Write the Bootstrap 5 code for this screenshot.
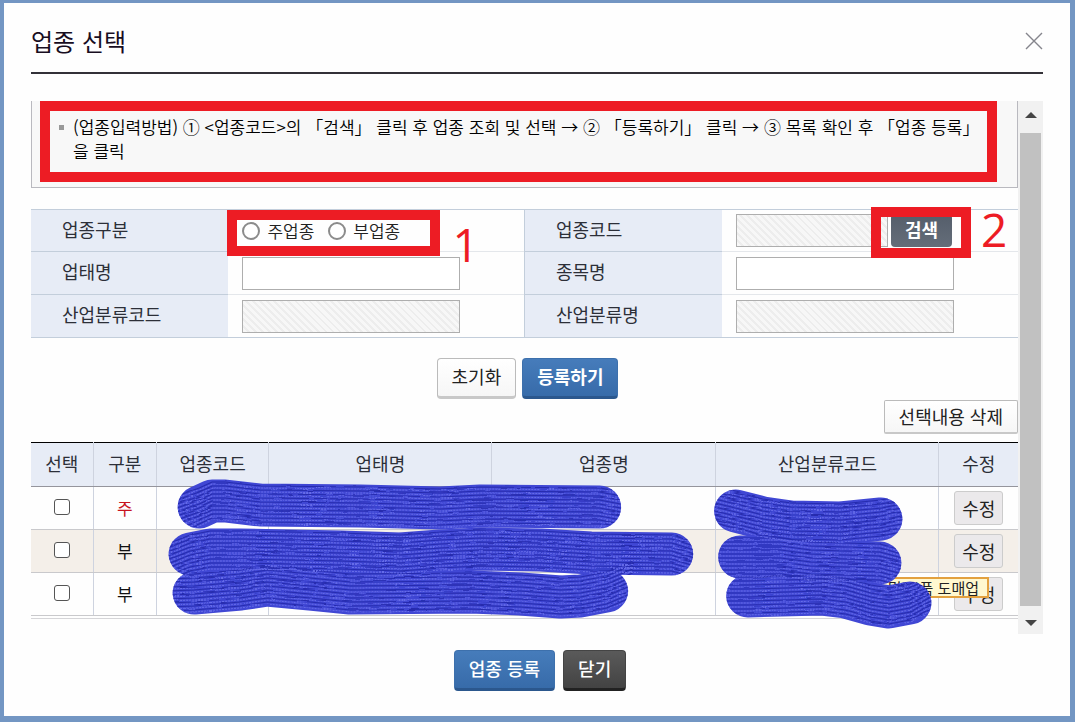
<!DOCTYPE html>
<html lang="ko">
<head>
<meta charset="utf-8">
<meta name="viewport" content="width=device-width, initial-scale=1">
<title>업종 선택</title>
<link href="https://cdn.jsdelivr.net/npm/bootstrap@5.3.0/dist/css/bootstrap.min.css" rel="stylesheet">
<style>
  body { background: #7396c3; font-family: "Noto Sans CJK KR", sans-serif; font-size: 17px; line-height: 24px; color: #111; }
  .frame { min-height: 100vh; padding: 3px 5px 6px 4px; }
  .dialog-box { background: #fefefe; padding: 16px 27px 24px; }
  .dialog-head { border-bottom: 2px solid #333138; height: 55px; padding-bottom: 10px; }
  .dialog-head h1 { font-size: 24px; line-height: 32px; font-weight: 400; color: #180d1f; }
  .close-x { width: 18px; height: 18px; }
  .scroll-area { margin-top: 27px; }
  .pane { min-width: 0; padding-bottom: 15px; }
  .bar { width: 25px; background: #f1f1f1; padding: 0 2px; }
  .bar .arrow { height: 32px; padding-bottom: 4px; }
  .bar .thumb { background: #c1c1c1; margin-bottom: -4px; }
  .ring { position: absolute; border: 10px solid #ed1c24; pointer-events: none; z-index: 2; }
  .guide { border: 1px solid #b9b9bf; border-top: 0; background: #f8f8f8; height: 87px; padding: 14px 32px 0 27px; }
  .guide .ring { inset: 0 20px 5px 8px; }
  .guide li { padding-left: 14px; color: #000; font-weight: 350; }
  .guide li::before { content: ""; position: absolute; left: 0; top: 10px; width: 5px; height: 5px; background: #999; }
  .form-grid { margin-top: 21px; border-top: 1px solid #c3cedb; table-layout: fixed; }
  .form-grid tr { height: 43px; border-bottom: 1px solid #e4e7eb; }
  .form-grid tr:first-child { height: 42px; }
  .form-grid tr:last-child { border-bottom-color: #c3cedb; }
  .form-grid th { width: 20%; padding: 0 0 4px 31px; background: #e7ecf6; border-bottom: 1px solid #c3cedb; font-size: 18px; font-weight: 400; color: #2c2f38; }
  .form-grid th:nth-child(3) { border-left: 1px solid #c3cedb; }
  .form-grid td { padding: 0 0 0 14px; }
  .field-box { width: 218px; height: 33px; border: 1px solid #aeaeae; border-radius: 0; padding: 0 6px; background: #fff; }
  .field-box:disabled { background: repeating-linear-gradient(45deg, #f7f7f7 0 3px, #ededed 3px 5px); }
  .field-box.short { width: 152px; }
  .pick input { appearance: none; width: 18px; height: 18px; border: 2px solid #8b8b8b; border-radius: 50%; background: #fff; margin: 0 7px 0 0; }
  .pick label { margin-right: 14px; color: #222; font-weight: 350; }
  .pick .ring { inset: -9px auto auto -15px; width: 213px; height: 46px; }
  .find-wrap .ring { inset: -7px auto auto 135px; width: 100px; height: 51px; }
  .step-no { position: absolute; font: 46px/50px "Open Sans", sans-serif; color: #ed1c24; z-index: 3; }
  .pick .step-no { left: 210px; top: 0; }
  .find-wrap .step-no { left: 245px; top: -10px; }
  .act { border-radius: 4px; height: 41px; padding: 0 14px 3px; font-size: 18px; line-height: 24px; font-weight: 400; color: #222; }
  .act.plain { background: linear-gradient(#fff, #f6f6f6); border: 1px solid #bbb; border-bottom: 3px solid #c8c8c8; }
  .act.blue { background: linear-gradient(#467cbb, #376ba9); border: 1px solid #3d70ac; border-bottom: 3px solid #2b578d; color: #fff; font-weight: 500; }
  .act.dark { background: linear-gradient(#5a5a5a, #434343); border: 1px solid #444; border-bottom: 3px solid #222; color: #fff; font-weight: 500; }
  .act.find { background: linear-gradient(#555e6b, #646d79); border: 0; color: #fff; height: 33px; padding: 0 14px 3px; margin-left: 3px; font-weight: 700; }
  .act.plain.small-h { height: 34px; border-radius: 2px; border-bottom-width: 2px; padding-bottom: 2px; }
  .act.edit { height: 34px; border: 1px solid #ccc; border-radius: 3px; background: #ebe9eb; padding: 0 7px; }
  .pair { gap: 6px; padding: 4px 0 1px 6px; }
  .closing { padding-left: 6px; }
  .list-wrap { margin-top: 8px; border-bottom: 1px solid #d5d5d8; padding-bottom: 2px; }
  .list-grid { table-layout: fixed; border-top: 1px solid #000; text-align: center; }
  .list-grid th, .list-grid td { padding: 0; border-left: 1px solid #ced3df; border-bottom: 1px solid #c9c9cc; }
  .list-grid tr > :first-child { border-left: 0; }
  .list-grid th { height: 44px; padding-bottom: 3px; background: #e7ecf6; border-bottom-color: #95959c; font-size: 18px; font-weight: 400; color: #2c2f38; }
  .list-grid td { height: 43px; }
  .list-grid .main-row { color: #c8141e; }
  .list-grid .odd { background: #f4efe9; }
  .list-grid input { appearance: none; display: block; margin: 0 auto 3px; width: 16px; height: 16px; border: 1px solid #555; border-radius: 3px; background: #fff; }
  .tip { position: absolute; right: 29px; bottom: 20px; height: 21px; border: 2px solid #e3a13f; background: #fff8cf; font-size: 15px; line-height: 17px; padding: 0 8px 0 10px; color: #222; }
  .scribble { position: absolute; left: 0; top: 0; width: 100%; height: 176px; overflow: visible; pointer-events: none; z-index: 3; }
</style>
</head>
<body>
<div class="frame d-flex flex-column">
  <main class="dialog-box flex-grow-1">
    <header class="dialog-head d-flex justify-content-between align-items-center">
      <h1 class="m-0">업종 선택</h1>
      <button type="button" class="btn p-0 border-0 d-flex" aria-label="닫기">
        <svg class="close-x" viewBox="0 0 18 18" fill="none" stroke="#85858c" stroke-width="1.4"><path d="M1 1l16 16M17 1L1 17"/></svg>
      </button>
    </header>

    <div class="scroll-area d-flex">
      <div class="pane flex-grow-1">
        <div class="guide position-relative">
          <ul class="list-unstyled m-0">
            <li class="position-relative">(업종입력방법) ① &lt;업종코드&gt;의 「검색」 클릭 후 업종 조회 및 선택 → ② 「등록하기」 클릭 → ③ 목록 확인 후 「업종 등록」을 클릭</li>
          </ul>
          <span class="ring"></span>
        </div>

        <form>
          <table class="form-grid w-100">
            <tr>
              <th scope="row">업종구분</th>
              <td>
                <div class="pick position-relative d-flex align-items-center">
                  <input type="radio" name="kind" id="main-kind"><label for="main-kind">주업종</label>
                  <input type="radio" name="kind" id="sub-kind"><label for="sub-kind">부업종</label>
                  <span class="ring"></span><span class="step-no">1</span>
                </div>
              </td>
              <th scope="row"><label for="code">업종코드</label></th>
              <td>
                <div class="find-wrap position-relative d-flex">
                  <input class="field-box short" id="code" type="text" disabled><button type="button" class="btn act find">검색</button>
                  <span class="ring"></span><span class="step-no">2</span>
                </div>
              </td>
            </tr>
            <tr>
              <th scope="row"><label for="type">업태명</label></th>
              <td><input class="field-box d-block" id="type" type="text"></td>
              <th scope="row"><label for="item">종목명</label></th>
              <td><input class="field-box d-block" id="item" type="text"></td>
            </tr>
            <tr>
              <th scope="row"><label for="class-code">산업분류코드</label></th>
              <td><input class="field-box d-block" id="class-code" type="text" disabled></td>
              <th scope="row"><label for="class-name">산업분류명</label></th>
              <td><input class="field-box d-block" id="class-name" type="text" disabled></td>
            </tr>
          </table>
          <div class="pair d-flex justify-content-center mt-3">
            <button type="reset" class="btn act plain">초기화</button>
            <button type="button" class="btn act blue fw-bold">등록하기</button>
          </div>
        </form>

        <div class="d-flex justify-content-end">
          <button type="button" class="btn act plain small-h">선택내용 삭제</button>
        </div>

        <div class="list-wrap position-relative">
          <table class="list-grid w-100">
            <colgroup><col style="width:6.3%"><col style="width:6.4%"><col style="width:11.4%"><col style="width:22.6%"><col style="width:22.7%"><col style="width:22.6%"><col style="width:8%"></colgroup>
            <thead>
              <tr><th>선택</th><th>구분</th><th>업종코드</th><th>업태명</th><th>업종명</th><th>산업분류코드</th><th>수정</th></tr>
            </thead>
            <tbody>
              <tr><td><input type="checkbox" aria-label="주업종 선택"></td><td class="main-row">주</td><td></td><td></td><td></td><td></td><td><button type="button" class="btn act edit">수정</button></td></tr>
              <tr class="odd"><td><input type="checkbox" aria-label="부업종 1 선택"></td><td>부</td><td></td><td></td><td></td><td></td><td><button type="button" class="btn act edit">수정</button></td></tr>
              <tr><td><input type="checkbox" aria-label="부업종 2 선택"></td><td>부</td><td></td><td></td><td></td><td></td><td><button type="button" class="btn act edit">수정</button></td></tr>
            </tbody>
          </table>
          <div class="tip">및 부품 도매업</div>
          <svg class="scribble" viewBox="31 442 986 176" preserveAspectRatio="none" fill="none" aria-hidden="true">
            <defs>
              <g id="strokes" stroke-linejoin="round">
                <path d="M199 507L212 501L225 501L260 505L360 506L400 507L440 508L480 506L599 507"/>
                <path d="M190 554L210 550L240 550L340 552L400 554L440 551L480 549L540 550L590 553L671 554"/>
                <path d="M194 593L240 589L267 585L310 589L350 593L470 592L520 594L560 597L580 596L606 591"/>
                <path d="M735 511L762 518L790 522L840 523L880 519"/>
                <path d="M739 557L780 557L810 561L879 563"/>
                <path d="M747 596L820 594L845 597L870 604L888 607L909 603"/>
              </g>
              <g id="grain" stroke-linejoin="round">
                <path d="M174 516L199 507L212 501L225 501L260 505L360 506L400 507L440 508L480 506L599 507L625 512"/>
                <path d="M165 564L190 554L210 550L240 550L340 552L400 554L440 551L480 549L540 550L590 553L671 554L697 562"/>
                <path d="M168 594L194 593L240 589L267 585L310 589L350 593L470 592L520 594L560 597L580 596L606 591L632 580"/>
                <path d="M710 505L735 511L762 518L790 522L840 523L880 519L906 514"/>
                <path d="M713 557L739 557L780 557L810 561L879 563L905 570"/>
                <path d="M722 596L747 596L820 594L845 597L870 604L888 607L909 603L934 590"/>
              </g>
              <filter id="rough" filterUnits="userSpaceOnUse" x="140" y="460" width="820" height="190">
                <feTurbulence type="fractalNoise" baseFrequency="0.06 0.3" numOctaves="2" seed="4"/>
                <feDisplacementMap in="SourceGraphic" scale="3" xChannelSelector="R" yChannelSelector="G"/>
              </filter>
              <mask id="ink" maskUnits="userSpaceOnUse" x="140" y="460" width="820" height="190">
                <use href="#strokes" stroke="#fff" stroke-width="43" stroke-linecap="round"/>
              </mask>
            </defs>
            <use href="#strokes" stroke="#4047d4" stroke-width="43" stroke-linecap="round"/>
            <g mask="url(#ink)">
              <g filter="url(#rough)">
                <g stroke="#262cae" stroke-width="1">
                  <use href="#grain" y="-19"/><use href="#grain" y="-15"/><use href="#grain" y="-11"/><use href="#grain" y="-7"/><use href="#grain" y="-3"/><use href="#grain" y="1"/><use href="#grain" y="5"/><use href="#grain" y="9"/><use href="#grain" y="13"/><use href="#grain" y="17"/>
                </g>
                <g stroke="#666ce8" stroke-width="1" stroke-dasharray="2 1">
                  <use href="#grain" y="-17"/><use href="#grain" y="-13"/><use href="#grain" y="-9"/><use href="#grain" y="-5"/><use href="#grain" y="-1"/><use href="#grain" y="3"/><use href="#grain" y="7"/><use href="#grain" y="11"/><use href="#grain" y="15"/><use href="#grain" y="19"/>
                </g>
              </g>
            </g>
          </svg>
        </div>
      </div>

      <div class="bar flex-shrink-0 d-flex flex-column" aria-hidden="true">
        <div class="arrow d-flex align-items-center justify-content-center"><svg width="12" height="6" viewBox="0 0 12 6"><path d="M0 6L6 0l6 6z" fill="#444"/></svg></div>
        <div class="thumb flex-grow-1"></div>
        <div class="arrow d-flex align-items-end justify-content-center pb-2"><svg width="12" height="6" viewBox="0 0 12 6"><path d="M0 0h12L6 6z" fill="#444"/></svg></div>
      </div>
    </div>

    <footer class="closing d-flex justify-content-center gap-2 pt-3">
      <button type="button" class="btn act blue">업종 등록</button>
      <button type="button" class="btn act dark">닫기</button>
    </footer>
  </main>
</div>
<script src="https://cdn.jsdelivr.net/npm/bootstrap@5.3.0/dist/js/bootstrap.bundle.min.js"></script>
</body>
</html>
